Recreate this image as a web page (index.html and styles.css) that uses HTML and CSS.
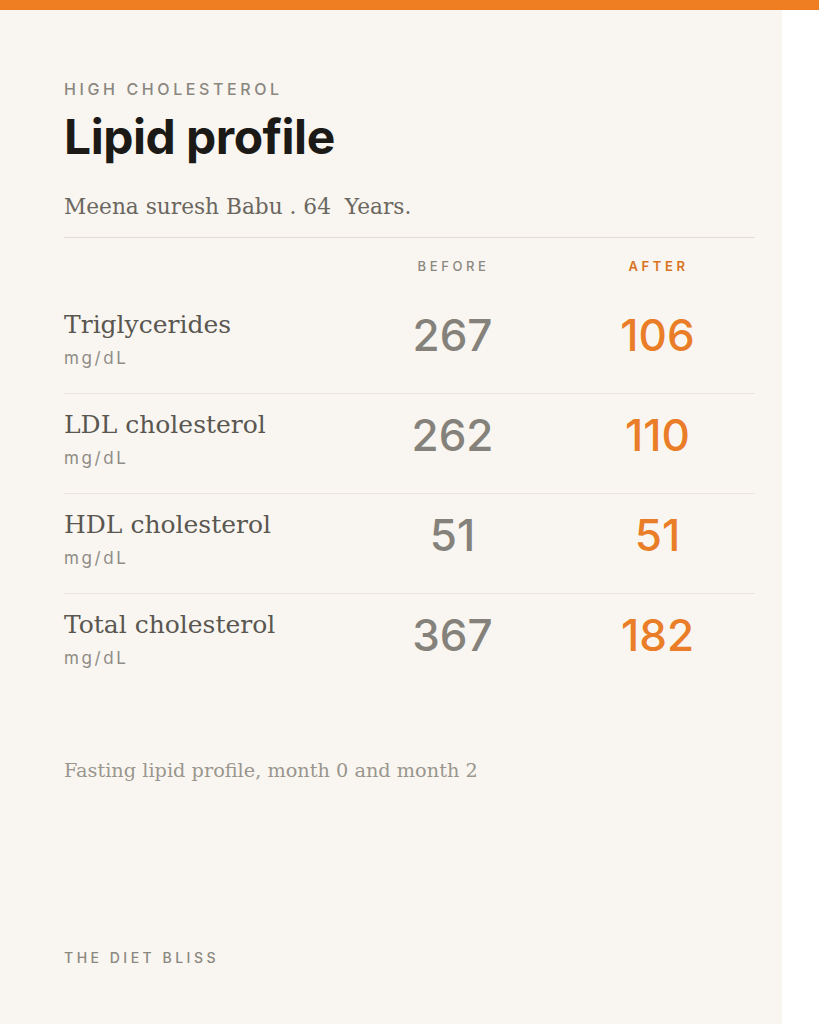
FILE: index.html
```html
<!DOCTYPE html>
<html>
<head>
<meta charset="utf-8">
<link rel="stylesheet" href="styles.css">
</head>
<body>
<div class="top-bar"></div>
<div class="page">
  <main class="card">
    <div class="eyebrow">HIGH CHOLESTEROL</div>
    <h1 class="title">Lipid profile</h1>
    <p class="patient">Meena suresh Babu . 64&nbsp; Years.</p>
    <div class="table">
      <div class="head">
        <span></span>
        <span class="col-label before">BEFORE</span>
        <span class="col-label after">AFTER</span>
      </div>
      <div class="row">
        <div class="metric"><div class="name">Triglycerides</div><div class="unit">mg/dL</div></div>
        <div class="val before">267</div>
        <div class="val after">106</div>
      </div>
      <div class="row">
        <div class="metric"><div class="name">LDL cholesterol</div><div class="unit">mg/dL</div></div>
        <div class="val before">262</div>
        <div class="val after">110</div>
      </div>
      <div class="row">
        <div class="metric"><div class="name">HDL cholesterol</div><div class="unit">mg/dL</div></div>
        <div class="val before">51</div>
        <div class="val after">51</div>
      </div>
      <div class="row">
        <div class="metric"><div class="name">Total cholesterol</div><div class="unit">mg/dL</div></div>
        <div class="val before">367</div>
        <div class="val after">182</div>
      </div>
    </div>
    <p class="note">Fasting lipid profile, month 0 and month 2</p>
    <div class="brand">THE DIET BLISS</div>
  </main>
  <div class="side"></div>
</div>
</body>
</html>
```
FILE: styles.css
```css
html, body {
  margin: 0;
  padding: 0;
  background: #ffffff;
}
body {
  width: 819px;
  height: 1024px;
  overflow: hidden;
}
.top-bar {
  height: 10px;
  background: #ef7d22;
}
.page {
  display: flex;
  height: 1014px;
}
.card {
  width: 782px;
  box-sizing: border-box;
  background: #f9f6f1;
  padding: 69px 27px 0 64px;
  display: flex;
  flex-direction: column;
}
.side {
  flex: 1;
  background: #ffffff;
}
.eyebrow {
  font-family: "Inter", sans-serif;
  font-size: 16px;
  line-height: 20px;
  letter-spacing: 3.6px;
  color: #8a877f;
  font-weight: 500;
}
.title {
  margin: 10px 0 0;
  font-family: "Inter", sans-serif;
  font-weight: 700;
  font-size: 48px;
  line-height: 56px;
  color: #1c1a17;
  letter-spacing: -0.5px;
}
.patient {
  margin: 28px 0 0;
  font-family: "DejaVu Serif", serif;
  font-size: 21.7px;
  line-height: 28px;
  color: #6b6760;
  padding-bottom: 16px;
  border-bottom: 1px solid #e3ddd3;
}
.table {
  display: flex;
  flex-direction: column;
}
.head, .row {
  display: grid;
  grid-template-columns: 1fr 205px 205px;
}
.head {
  padding-top: 20px;
  height: 36px;
}
.col-label {
  text-align: center;
  padding-left: 12px;
  font-family: "Inter", sans-serif;
  font-size: 13px;
  line-height: 16px;
  letter-spacing: 3.6px;
  font-weight: 500;
}
.col-label.before { color: #8a877f; }
.col-label.after { color: #d9731e; font-weight: 600; }
.row {
  height: 100px;
  box-sizing: border-box;
  align-items: start;
  padding-top: 16px;
  border-bottom: 1px solid #ebe5db;
}
.row:last-child {
  border-bottom: none;
}
.name {
  font-family: "DejaVu Serif", serif;
  font-size: 25px;
  line-height: 30px;
  color: #5a5751;
}
.unit {
  margin-top: 8px;
  font-family: "Inter", sans-serif;
  font-size: 17px;
  line-height: 20px;
  letter-spacing: 2.6px;
  color: #8f8c85;
}
.val {
  text-align: center;
  padding-left: 10px;
  font-family: "Inter", sans-serif;
  font-size: 44px;
  line-height: 50px;
  font-weight: 500;
}
.val.before { color: #85827b; }
.val.after { color: #ea7d27; }
.note {
  margin: 65px 0 0;
  font-family: "DejaVu Serif", serif;
  font-size: 19.3px;
  line-height: 24px;
  color: #9a968e;
}
.brand {
  margin-top: 166px;
  font-family: "Inter", sans-serif;
  font-size: 14px;
  line-height: 18px;
  letter-spacing: 3.5px;
  color: #8a877f;
  font-weight: 500;
}
```
